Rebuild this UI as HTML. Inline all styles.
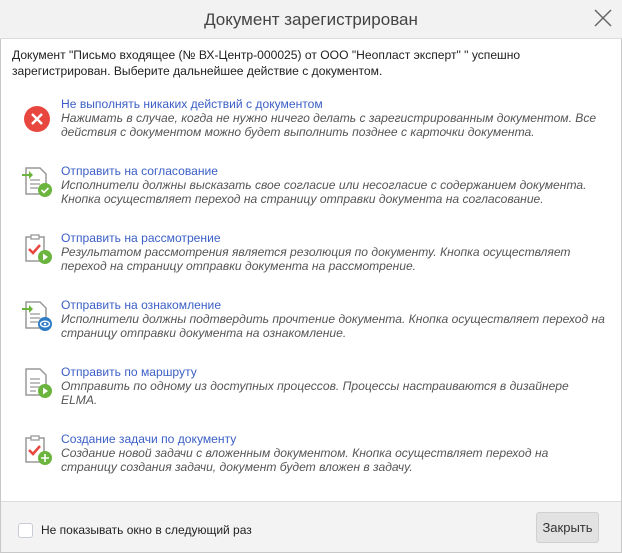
<!DOCTYPE html>
<html><head><meta charset="utf-8"><style>
*{margin:0;padding:0;box-sizing:border-box}
body{width:622px;height:553px;background:#fff;font-family:"Liberation Sans",sans-serif;font-size:12px;color:#222;position:relative;overflow:hidden}
.frame{position:absolute;left:0;top:0;width:622px;height:553px;border:1px solid #c8c8c8}
.hdr{position:absolute;left:0;top:0;width:622px;height:39px;background:#f2f2f2;border-bottom:1px solid #dcdcdc;text-align:center;font-size:17px;line-height:39px;color:#444}
.x{position:absolute;right:8px;top:7px}
.intro{position:absolute;left:12px;top:47px;line-height:16px;width:600px;font-size:12.1px}
.it{position:absolute;left:61px;line-height:14px;width:545px;font-size:12.1px}
.it a{color:#3b5fc6;text-decoration:none;display:block}
.it i{color:#555;display:block}
.ic{position:absolute;left:20px}
.ftr{position:absolute;left:1px;top:501px;width:620px;height:51px;background:#f3f3f3;border-top:1px solid #dcdcdc}
.cb{position:absolute;left:17px;top:21px;width:15px;height:15px;border:1px solid #c8ccd4;border-radius:3px;background:#fff}
.ftr span{position:absolute;left:40px;top:21px}
.btn{position:absolute;top:10px;width:63px;height:31px;background:#e2e2e2;border:1px solid #d0d0d0;border-radius:3px;text-align:center;line-height:29px;font-size:13px;color:#333}
</style></head><body>
<div class="frame"></div>
<div class="hdr">Документ зарегистрирован
<svg class="x" width="22" height="22" viewBox="0 0 22 22"><path d="M3 3L19 19M19 3L3 19" stroke="#666" stroke-width="1.5"/></svg></div>
<div class="intro">Документ "Письмо входящее (№ ВХ-Центр-000025) от ООО "Неопласт эксперт" " успешно зарегистрирован. Выберите дальнейшее действие с документом.</div>

<svg class="ic" style="top:104px;left:22px" width="30" height="30" viewBox="0 0 30 30"><circle cx="15" cy="15" r="13" fill="#e8473f"/><path d="M10 10L20 20M20 10L10 20" stroke="#fff" stroke-width="2.4"/></svg>
<div class="it" style="top:97px"><a>Не выполнять никаких действий с документом</a><i>Нажимать в случае, когда не нужно ничего делать с зарегистрированным документом. Все действия с документом можно будет выполнить позднее с карточки документа.</i></div>

<svg class="ic" style="top:166px" width="34" height="34" viewBox="0 0 34 34"><path d="M6 2h14l6 6v20H6z" fill="#fff" stroke="#999" stroke-width="1.5"/><path d="M10 14h10M10 18h10M10 22h8" stroke="#999" stroke-width="1.2"/><path d="M2 8h7v-3l4 4-4 4v-3H2z" fill="#6bb43e"/><circle cx="25" cy="24" r="7" fill="#6bb43e"/><path d="M21.5 24l2.5 2.5 4.5-4.5" stroke="#fff" stroke-width="1.6" fill="none"/></svg>
<div class="it" style="top:164px"><a>Отправить на согласование</a><i>Исполнители должны высказать свое согласие или несогласие с содержанием документа. Кнопка осуществляет переход на страницу отправки документа на согласование.</i></div>

<svg class="ic" style="top:233px" width="34" height="34" viewBox="0 0 34 34"><rect x="6" y="4" width="18" height="24" fill="#fff" stroke="#999" stroke-width="1.5"/><rect x="11" y="2" width="8" height="4" fill="#fff" stroke="#999" stroke-width="1.3"/><path d="M9 16l4 4 7-8" stroke="#e8473f" stroke-width="2.5" fill="none"/><circle cx="25" cy="24" r="7" fill="#6bb43e"/><path d="M23 20.5v7l5-3.5z" fill="#fff"/></svg>
<div class="it" style="top:231px"><a>Отправить на рассмотрение</a><i>Результатом рассмотрения является резолюция по документу. Кнопка осуществляет переход на страницу отправки документа на рассмотрение.</i></div>

<svg class="ic" style="top:300px" width="34" height="34" viewBox="0 0 34 34"><path d="M6 2h14l6 6v20H6z" fill="#fff" stroke="#999" stroke-width="1.5"/><path d="M10 14h10M10 18h10M10 22h8" stroke="#999" stroke-width="1.2"/><path d="M2 8h7v-3l4 4-4 4v-3H2z" fill="#6bb43e"/><circle cx="25" cy="24" r="7" fill="#2e7cc4"/><ellipse cx="25" cy="24" rx="4.5" ry="2.8" fill="none" stroke="#fff" stroke-width="1.3"/><circle cx="25" cy="24" r="1.3" fill="#fff"/></svg>
<div class="it" style="top:298px"><a>Отправить на ознакомление</a><i>Исполнители должны подтвердить прочтение документа. Кнопка осуществляет переход на страницу отправки документа на ознакомление.</i></div>

<svg class="ic" style="top:367px" width="34" height="34" viewBox="0 0 34 34"><path d="M6 2h14l6 6v20H6z" fill="#fff" stroke="#999" stroke-width="1.5"/><path d="M10 12h10M10 16h10M10 20h10M10 24h6" stroke="#999" stroke-width="1.2"/><circle cx="25" cy="24" r="7" fill="#6bb43e"/><path d="M23 20.5v7l5-3.5z" fill="#fff"/></svg>
<div class="it" style="top:365px"><a>Отправить по маршруту</a><i>Отправить по одному из доступных процессов. Процессы настраиваются в дизайнере ELMA.</i></div>

<svg class="ic" style="top:434px" width="34" height="34" viewBox="0 0 34 34"><rect x="6" y="4" width="18" height="24" fill="#fff" stroke="#999" stroke-width="1.5"/><rect x="11" y="2" width="8" height="4" fill="#fff" stroke="#999" stroke-width="1.3"/><path d="M9 16l4 4 7-8" stroke="#e8473f" stroke-width="2.5" fill="none"/><circle cx="25" cy="24" r="7" fill="#6bb43e"/><path d="M25 20v8M21 24h8" stroke="#fff" stroke-width="1.6"/></svg>
<div class="it" style="top:432px"><a>Создание задачи по документу</a><i>Создание новой задачи с вложенным документом. Кнопка осуществляет переход на страницу создания задачи, документ будет вложен в задачу.</i></div>

<div class="ftr"><div class="cb"></div><span>Не показывать окно в следующий раз</span><div class="btn" style="left:535px">Закрыть</div></div>
</body></html>
